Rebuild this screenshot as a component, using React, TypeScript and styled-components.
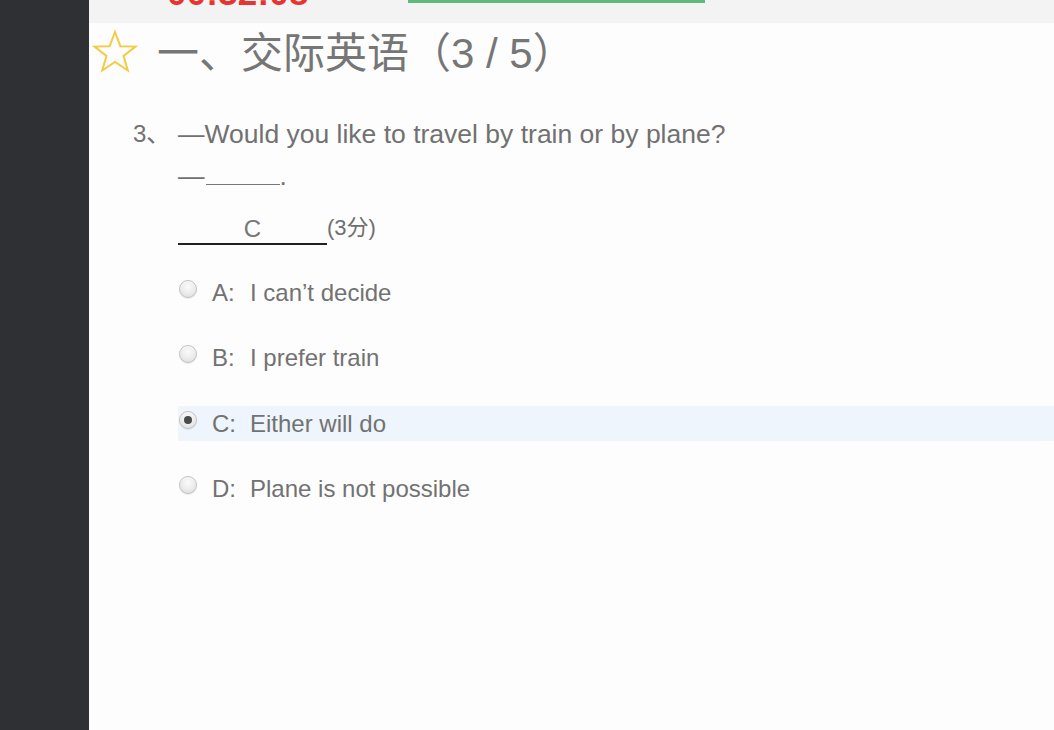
import React from "react";
import styled, { createGlobalStyle } from "styled-components";

const Global = createGlobalStyle`
  html, body { margin: 0; padding: 0; background: #fdfdfd; }
  body { font-family: "Liberation Sans", Arial, "Noto Sans CJK SC", sans-serif; }
  * { box-sizing: border-box; }
`;

const Page = styled.div`
  display: flex;
  width: 1054px;
  height: 730px;
  overflow: hidden;
`;

const Sidebar = styled.aside`
  width: 89px;
  flex: none;
  background: #2f3034;
`;

const Main = styled.main`
  flex: 1;
  background: #fdfdfd;
  display: flex;
  flex-direction: column;
`;

const Header = styled.header`
  height: 23px;
  flex: none;
  background: #f3f3f3;
  overflow: hidden;
  display: flex;
  align-items: flex-start;
  padding-left: 78px;
`;

const Timer = styled.div`
  width: 241px;
  margin-top: -25px;
  font-size: 35px;
  line-height: 35px;
  font-weight: bold;
  color: #e8342f;
  letter-spacing: 0.2px;
`;

const Progress = styled.div`
  width: 297px;
  height: 3px;
  background: #5dba7b;
`;

const TitleRow = styled.div`
  display: flex;
  align-items: center;
  height: 62px;
  padding-left: 3px;
  margin-top: 2px;
`;

const Star = styled.svg`
  width: 46px;
  height: 46px;
  flex: none;
  margin-top: -8px;
`;

const Title = styled.h1`
  margin: -5px 0 0 19px;
  font-family: "Liberation Sans", "Noto Sans CJK SC", sans-serif;
  font-weight: 400;
  font-size: 42px;
  line-height: 1;
  color: #767676;
`;

const Question = styled.section`
  padding-left: 44px;
  margin-top: 26px;
  color: #717171;
  font-size: 26.5px;
`;

const QLine = styled.div`
  display: flex;
  line-height: 42px;
  height: 42px;
`;

const QNum = styled.span`
  width: 45px;
  flex: none;
  font-size: 24px;
`;

const QText = styled.span`
  white-space: pre;
`;

const Blank = styled.span`
  display: inline-block;
  width: 74px;
  height: 28px;
  border-bottom: 1px solid #777;
  margin-left: 1px;
  vertical-align: baseline;
`;

const AnswerLine = styled.div`
  display: flex;
  align-items: flex-end;
  margin-left: 45px;
  margin-top: 14px;
  height: 34px;
`;

const AnswerBlank = styled.span`
  display: inline-block;
  width: 149px;
  border-bottom: 2px solid #222;
  text-align: center;
  font-size: 24px;
  line-height: 29px;
  color: #777;
`;

const Score = styled.span`
  font-family: "Liberation Sans", "Noto Sans CJK SC", sans-serif;
  font-size: 22px;
  line-height: 22px;
  margin-bottom: 6px;
  color: #6f6f6f;
`;

const Options = styled.div`
  display: flex;
  flex-direction: column;
  gap: 30.5px;
  margin-left: 45px;
  margin-top: 30px;
`;

const OptionRow = styled.label<{ $selected?: boolean }>`
  display: flex;
  align-items: center;
  height: 35px;
  background: ${(p) => (p.$selected ? "#eef5fc" : "transparent")};
  font-size: 24px;
  color: #727272;
`;

const Radio = styled.span<{ $checked?: boolean }>`
  width: 18px;
  height: 18px;
  flex: none;
  margin: -8px 0 0 1px;
  border-radius: 50%;
  border: 1px solid #c2c2c2;
  background: radial-gradient(circle at 50% 35%, #fbfbfb 0%, #e9e9e9 60%, #d6d6d6 100%);
  box-shadow: inset 0 1px 1px rgba(255,255,255,0.8), 0 1px 1px rgba(0,0,0,0.08);
  display: flex;
  align-items: center;
  justify-content: center;
  &::after {
    content: "";
    display: ${(p) => (p.$checked ? "block" : "none")};
    width: 8px;
    height: 8px;
    border-radius: 50%;
    background: #4a4a4a;
  }
`;

const OptKey = styled.span`
  margin-left: 15px;
  width: 38px;
  flex: none;
`;

const OptText = styled.span``;

const options = [
  { key: "A", text: "I can\u2019t decide" },
  { key: "B", text: "I prefer train" },
  { key: "C", text: "Either will do" },
  { key: "D", text: "Plane is not possible" },
];

export default function App() {
  const selected = "C";
  return (
    <>
      <Global />
      <Page>
        <Sidebar />
        <Main>
          <Header>
            <Timer>00:32:08</Timer>
            <Progress />
          </Header>
          <TitleRow>
            <Star viewBox="0 0 46 46">
              <polygon
                points="23,3 28.3,17.2 43.5,17.6 31.5,26.9 35.8,41.5 23,33 10.2,41.5 14.5,26.9 2.5,17.6 17.7,17.2"
                fill="none"
                stroke="#f3cb45"
                strokeWidth="2"
                strokeLinejoin="miter"
              />
            </Star>
            <Title>一、交际英语（3 / 5）</Title>
          </TitleRow>
          <Question>
            <QLine>
              <QNum>3、</QNum>
              <QText>—Would you like to travel by train or by plane?</QText>
            </QLine>
            <QLine>
              <QNum />
              <QText>
                —<Blank />.
              </QText>
            </QLine>
            <AnswerLine>
              <AnswerBlank>C</AnswerBlank>
              <Score>(3分)</Score>
            </AnswerLine>
            <Options>
              {options.map((o) => (
                <OptionRow key={o.key} $selected={o.key === selected}>
                  <Radio $checked={o.key === selected} />
                  <OptKey>{o.key}:</OptKey>
                  <OptText>{o.text}</OptText>
                </OptionRow>
              ))}
            </Options>
          </Question>
        </Main>
      </Page>
    </>
  );
}
